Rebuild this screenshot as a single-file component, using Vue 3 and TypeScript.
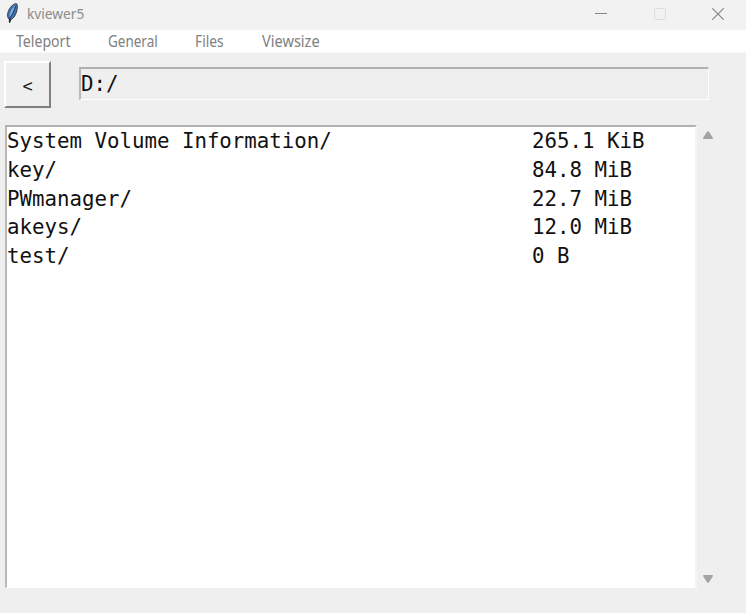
<script setup lang="ts">
interface Entry {
  name: string
  size: string
}

const menus: string[] = ['Teleport', 'General', 'Files', 'Viewsize']
const path = 'D:/'
const entries: Entry[] = [
  { name: 'System Volume Information/', size: '265.1 KiB' },
  { name: 'key/', size: '84.8 MiB' },
  { name: 'PWmanager/', size: '22.7 MiB' },
  { name: 'akeys/', size: '12.0 MiB' },
  { name: 'test/', size: '0 B' },
]
</script>

<template>
  <div class="window">
    <header class="titlebar">
      <svg class="feather" width="14" height="20" viewBox="0 0 14 20">
        <path d="M3.6 19.4 L3.4 16.4 C.6 14.6 1.2 9.4 4 5 C6 2 9 .2 10.6 .8 C11.8 1.8 11.4 6 10.4 9.4 C9.2 13 7.2 15.6 4.8 16.6 Z" fill="#3f74b3" stroke="#3a3f48" stroke-width="1" />
        <path d="M3.6 11.5 C4.6 7.6 6.8 4.4 9 2.4 C8.6 6 6.6 10.4 4 14 Z" fill="#79aee8" />
        <path d="M3.7 19.4 L4 15.2 C6.4 11.6 8 8.4 9.6 3.4" fill="none" stroke="#1f2a3c" stroke-width=".8" />
        <path d="M3.6 19.4V15.6" stroke="#222" stroke-width="1.4" />
      </svg>
      <span class="title">kviewer5</span>
      <div class="controls">
        <svg width="12" height="12" viewBox="0 0 12 12"><path d="M0 5.5H12" stroke="#858585" /></svg>
        <svg width="12" height="12" viewBox="0 0 12 12"><rect x=".5" y=".5" width="11" height="11" rx="1" fill="none" stroke="#dddddd" /></svg>
        <svg width="12" height="12" viewBox="0 0 12 12"><path d="M.3 .3L11.7 11.7M11.7 .3L.3 11.7" stroke="#858585" stroke-width="1.1" /></svg>
      </div>
    </header>
    <nav class="menubar">
      <span v-for="menu in menus" :key="menu" :class="['menu', menu.toLowerCase()]">{{ menu }}</span>
    </nav>
    <div class="toolbar">
      <button class="back" type="button">&lt;</button>
      <div class="path">{{ path }}</div>
    </div>
    <main class="browser">
      <div class="list">
        <div v-for="entry in entries" :key="entry.name" class="row">
          <span>{{ entry.name }}</span>
          <span>{{ entry.size }}</span>
        </div>
      </div>
      <div class="scrollbar">
        <svg width="12" height="8" viewBox="0 0 12 8"><path d="M1 7 L5 .7 Q6 -.3 7 .7 L11 7 Q11 8 10 8 H2 Q1 8 1 7Z" fill="#a3a3a3" /></svg>
        <svg width="12" height="8" viewBox="0 0 12 8"><path d="M1 1 L5 7.3 Q6 8.3 7 7.3 L11 1 Q11 0 10 0 H2 Q1 0 1 1Z" fill="#a3a3a3" /></svg>
      </div>
    </main>
  </div>
</template>

<style scoped>
.window {
  width: 746px;
  height: 613px;
  box-sizing: border-box;
  background: #efefef;
  overflow: hidden;
}
.titlebar {
  height: 30px;
  display: flex;
  align-items: flex-start;
  padding: 0 22px 0 6px;
  box-sizing: border-box;
  background: #f2f2f2;
}
.feather { margin-top: 3px; flex: none; }
.title {
  margin-left: 7px;
  font: 15px/26px "Noto Sans", sans-serif;
  color: #8c8c8c;
  transform: scaleX(.915);
  transform-origin: left;
}
.controls {
  margin: 8px 0 0 auto;
  display: flex;
  gap: 46.5px;
}
.menubar {
  height: 23px;
  box-sizing: border-box;
  padding-left: 16px;
  display: flex;
  background: #fff;
  border-bottom: 1px solid #f7f7f7;
  font: 15.5px/22px "Noto Sans", sans-serif;
  color: #808080;
}
.menu { transform: scaleX(.89); transform-origin: left; white-space: nowrap; }
.teleport { width: 92px; transform: scaleX(.91); }
.general { width: 87px; transform: scaleX(.87); }
.files { width: 67px; }
.viewsize { transform: scaleX(.94); }
.toolbar {
  height: 72px;
  box-sizing: border-box;
  padding: 8px 0 0 4px;
  display: flex;
}
.back {
  width: 47px;
  height: 47px;
  box-sizing: border-box;
  border: 2px solid;
  border-color: #fff #808080 #808080 #fff;
  border-radius: 0;
  padding: 3px 0 0;
  background: #efefef;
  font: 17px/20px "DejaVu Sans Mono", monospace;
  color: #222;
}
.path {
  width: 630px;
  height: 33px;
  box-sizing: border-box;
  margin: 6px 0 0 28px;
  border: solid;
  border-width: 2px 1px 1px 2px;
  border-color: #b0b0b0 #fff #fff #b8b8b8;
  font: 20.76px/30px "DejaVu Sans Mono", monospace;
  color: #111;
}
.browser { display: flex; }
.list {
  width: 692px;
  height: 463px;
  box-sizing: border-box;
  margin-left: 5px;
  border: solid;
  border-width: 2px 2px 1px 2px;
  border-color: #b0b0b0 #f5f5f5 #fff #b8b8b8;
  background: #fff;
  font: 20.76px/28px "DejaVu Sans Mono", monospace;
  color: #111;
}
.row {
  display: grid;
  grid-template-columns: 525px 1fr;
  height: 28.75px;
  white-space: pre;
}
.scrollbar {
  display: flex;
  flex-direction: column;
  justify-content: space-between;
  height: 458px;
  box-sizing: border-box;
  margin-left: 5px;
  padding-top: 6px;
}
.scrollbar svg { display: block; }
</style>
